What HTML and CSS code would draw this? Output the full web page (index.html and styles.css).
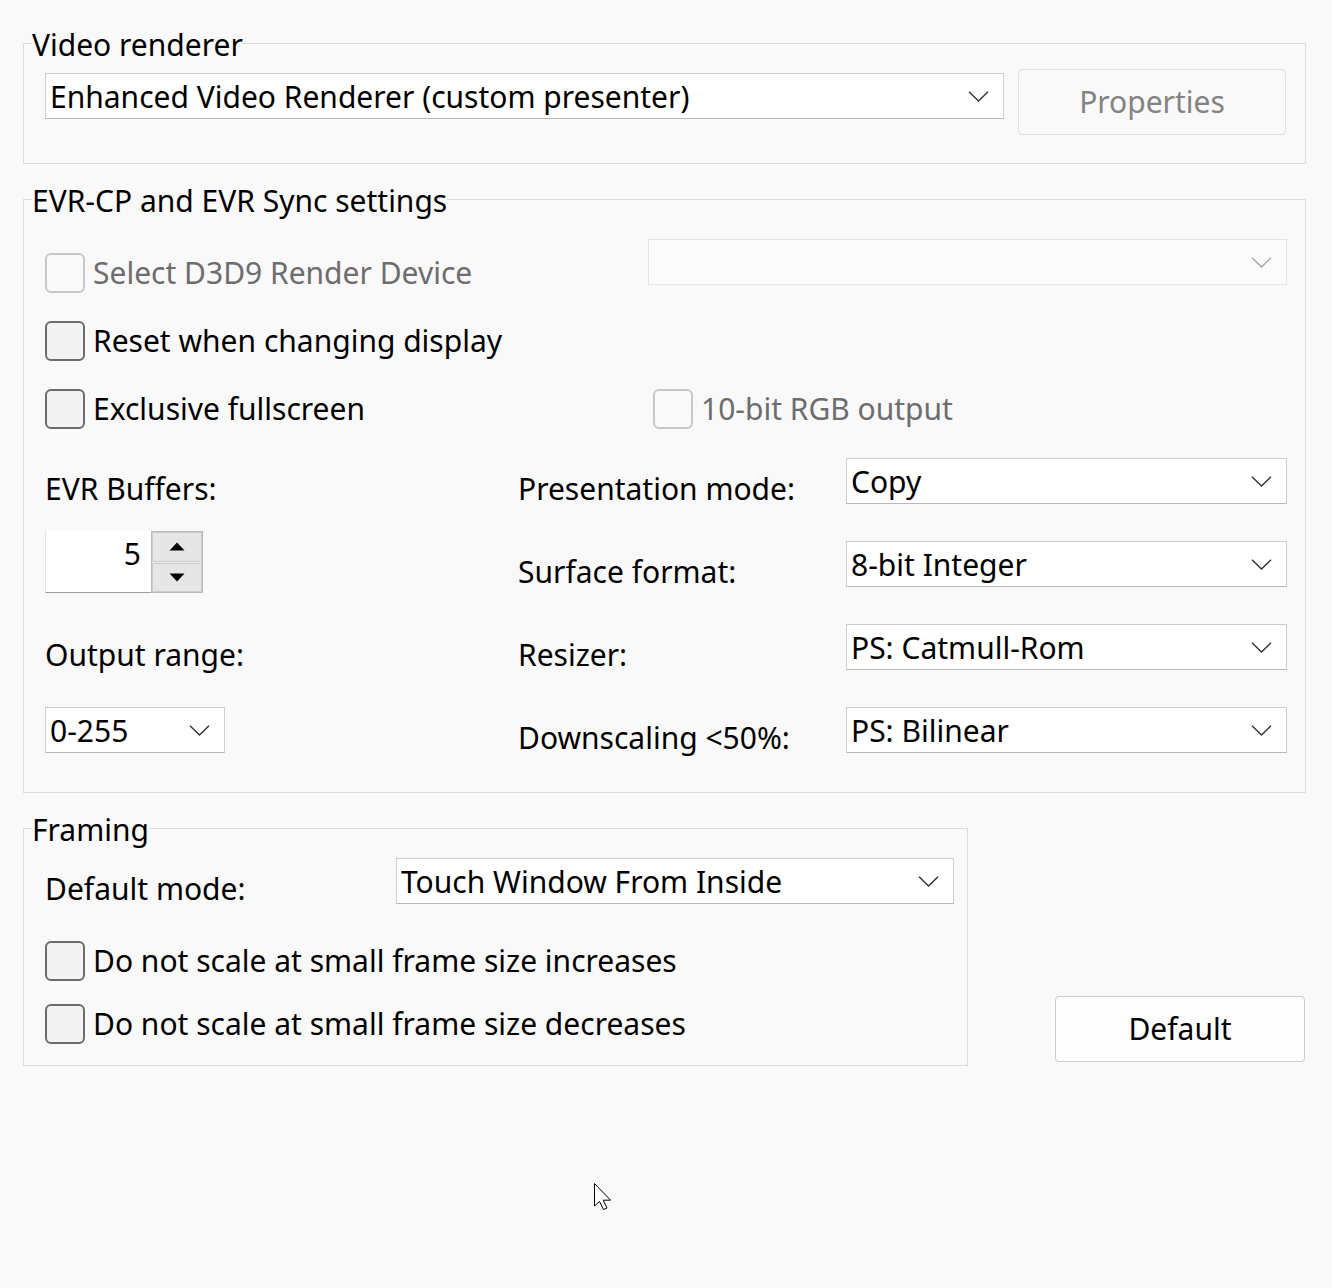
FILE: index.html
```html
<!DOCTYPE html>
<html lang="en">
<head>
<meta charset="utf-8">
<title>Output settings</title>
<link rel="stylesheet" href="styles.css">
</head>
<body>
<div class="page">
  <fieldset class="group group-renderer">
    <legend>Video renderer</legend>
    <div class="group-body renderer-row">
      <div class="combo combo-renderer">
        <span class="combo-text">Enhanced Video Renderer (custom presenter)</span>
        <svg class="chev" width="21" height="11" viewBox="0 0 21 11"><polyline points="1,0.8 10.5,10 20,0.8" fill="none" stroke="#333" stroke-width="1.4"/></svg>
      </div>
      <div class="btn btn-disabled btn-props">Properties</div>
    </div>
  </fieldset>

  <fieldset class="group group-evr">
    <legend>EVR-CP and EVR Sync settings</legend>
    <div class="group-body">
      <div class="row row-a">
        <div class="check disabled row-a-check"><span class="box"></span><span class="label">Select D3D9 Render Device</span></div>
        <div class="combo combo-disabled combo-device">
          <span class="combo-text"></span>
          <svg class="chev" width="21" height="11" viewBox="0 0 21 11"><polyline points="1,0.8 10.5,10 20,0.8" fill="none" stroke="#a8a8a8" stroke-width="1.4"/></svg>
        </div>
      </div>
      <div class="row row-b">
        <div class="check"><span class="box"></span><span class="label">Reset when changing display</span></div>
      </div>
      <div class="row row-c">
        <div class="check check-left"><span class="box"></span><span class="label">Exclusive fullscreen</span></div>
        <div class="check disabled"><span class="box"></span><span class="label">10-bit RGB output</span></div>
      </div>

      <div class="settings-grid">
        <div class="field-label">EVR Buffers:</div>
        <div class="field-label">Presentation mode:</div>
        <div class="combo"><span class="combo-text">Copy</span><svg class="chev" width="21" height="11" viewBox="0 0 21 11"><polyline points="1,0.8 10.5,10 20,0.8" fill="none" stroke="#333" stroke-width="1.4"/></svg></div>

        <div class="spin">
          <div class="spin-edit">5</div>
          <div class="spin-buttons">
            <div class="spin-btn"><svg width="16" height="9" viewBox="0 0 16 9"><polygon points="8,0.5 15.5,8.5 0.5,8.5" fill="#000"/></svg></div>
            <div class="spin-btn"><svg width="16" height="9" viewBox="0 0 16 9"><polygon points="0.5,0.5 15.5,0.5 8,8.5" fill="#000"/></svg></div>
          </div>
        </div>
        <div class="field-label">Surface format:</div>
        <div class="combo"><span class="combo-text">8-bit Integer</span><svg class="chev" width="21" height="11" viewBox="0 0 21 11"><polyline points="1,0.8 10.5,10 20,0.8" fill="none" stroke="#333" stroke-width="1.4"/></svg></div>

        <div class="field-label">Output range:</div>
        <div class="field-label">Resizer:</div>
        <div class="combo"><span class="combo-text">PS: Catmull-Rom</span><svg class="chev" width="21" height="11" viewBox="0 0 21 11"><polyline points="1,0.8 10.5,10 20,0.8" fill="none" stroke="#333" stroke-width="1.4"/></svg></div>

        <div class="combo combo-range"><span class="combo-text">0-255</span><svg class="chev" width="21" height="11" viewBox="0 0 21 11"><polyline points="1,0.8 10.5,10 20,0.8" fill="none" stroke="#333" stroke-width="1.4"/></svg></div>
        <div class="field-label">Downscaling &lt;50%:</div>
        <div class="combo"><span class="combo-text">PS: Bilinear</span><svg class="chev" width="21" height="11" viewBox="0 0 21 11"><polyline points="1,0.8 10.5,10 20,0.8" fill="none" stroke="#333" stroke-width="1.4"/></svg></div>
      </div>
    </div>
  </fieldset>

  <div class="bottom-row">
    <fieldset class="group group-framing">
      <legend>Framing</legend>
      <div class="group-body">
        <div class="row framing-mode">
          <div class="field-label mode-label">Default mode:</div>
          <div class="combo combo-mode"><span class="combo-text">Touch Window From Inside</span><svg class="chev" width="21" height="11" viewBox="0 0 21 11"><polyline points="1,0.8 10.5,10 20,0.8" fill="none" stroke="#333" stroke-width="1.4"/></svg></div>
        </div>
        <div class="row framing-inc">
          <div class="check"><span class="box"></span><span class="label">Do not scale at small frame size increases</span></div>
        </div>
        <div class="row framing-dec">
          <div class="check"><span class="box"></span><span class="label">Do not scale at small frame size decreases</span></div>
        </div>
      </div>
    </fieldset>
    <div class="btn btn-default">Default</div>
  </div>
</div>

<svg class="cursor" width="20" height="30" viewBox="0 0 20 30">
  <path d="M0.5,0.5 L0.5,23 L5.5,18.5 L9.5,26.5 L13,25 L9.2,17.2 L16.5,17.2 Z" fill="#fff" stroke="#000" stroke-width="1" stroke-linejoin="miter"/>
</svg>
</body>
</html>
```

FILE: styles.css
```css
html, body {
  margin: 0;
  padding: 0;
}

body {
  background: #f9f9f9;
  font-family: "Noto Sans", "Open Sans", sans-serif;
  font-size: 30px;
  color: #000;
  min-height: 1288px;
  position: relative;
}

.page {
  padding: 23px 26px 0 23px;
}

.group {
  margin: 0;
  padding: 0;
  min-width: 0;
  border: 1px solid #dcdcdc;
}

.group legend {
  margin-left: 8px;
  padding: 4px 0 0 0;
  line-height: 36px;
  white-space: nowrap;
}

.group-body {
  padding: 0 18px 0 21px;
}

/* Group 1 */
.renderer-row {
  display: flex;
  align-items: flex-start;
  padding-top: 6px;
  padding-bottom: 28px;
  padding-right: 19px;
}

.combo {
  box-sizing: border-box;
  height: 46px;
  background: #fff;
  border: 1px solid #cdcdcd;
  border-bottom-color: #b8b8b8;
  display: flex;
  align-items: center;
  padding: 0 14px 0 4px;
  flex: none;
}

.combo-text {
  flex: 1;
  line-height: 44px;
  padding-top: 2px;
  white-space: nowrap;
  overflow: hidden;
}

.chev {
  flex: none;
  display: block;
}

.combo-renderer {
  width: 959px;
  margin-top: 4px;
}

.btn {
  box-sizing: border-box;
  height: 66px;
  display: flex;
  align-items: center;
  justify-content: center;
  border-radius: 4px;
  line-height: 40px;
  flex: none;
}

.btn-disabled {
  border: 1px solid #e1e1e1;
  background: #f9f9f9;
  color: #838383;
}

.btn-props {
  width: 268px;
  margin-left: auto;
}

/* Group 2 */
.group-evr {
  margin-top: 15px;
}

.group-evr .group-body {
  padding-top: 20px;
  padding-bottom: 39px;
}

.row {
  display: flex;
  align-items: flex-start;
}

.check {
  display: flex;
  align-items: flex-start;
}

.check .box {
  box-sizing: border-box;
  width: 40px;
  height: 40px;
  border: 2px solid #6c6c6c;
  border-radius: 6px;
  background: #f3f3f3;
  flex: none;
}

.check .label {
  margin-left: 8px;
  line-height: 38px;
  padding-top: 1px;
  white-space: nowrap;
}

.check.disabled .box {
  border-color: #c8c8c8;
  background: #fafafa;
}

.check.disabled .label {
  color: #6d6d6d;
}

.row-a-check {
  margin-top: 14px;
}

.combo-disabled {
  background: #fbfbfb;
  border-color: #e3e3e3;
}

.combo-device {
  width: 639px;
  margin-left: auto;
}

.row-b {
  margin-top: 28px;
}

.row-c {
  margin-top: 28px;
}

.check-left {
  width: 608px;
}

.settings-grid {
  margin-top: 29px;
  display: grid;
  grid-template-columns: 473px 328px 441px;
  grid-template-rows: repeat(4, 46px);
  row-gap: 37px;
  align-items: start;
}

.field-label {
  padding-top: 8px;
  line-height: 46px;
  white-space: nowrap;
}

.spin {
  display: flex;
  margin-top: -10px;
  height: 62px;
  width: 158px;
}

.spin-edit {
  box-sizing: border-box;
  width: 106px;
  height: 62px;
  background: #fff;
  border-left: 1px solid #e3e3e3;
  border-bottom: 1px solid #9c9c9c;
  text-align: right;
  padding-right: 10px;
  line-height: 46px;
}

.spin-buttons {
  box-sizing: border-box;
  width: 52px;
  height: 62px;
  border: 1px solid #b9b9b9;
  background: #f0f0f0;
  display: flex;
  flex-direction: column;
  gap: 1px;
  padding: 0;
}

.spin-btn {
  flex: 1;
  box-sizing: border-box;
  border: 1px solid #cbcbcb;
  background: #e6e6e6;
  display: flex;
  align-items: center;
  justify-content: center;
}

.spin-btn svg {
  display: block;
}

.combo-range {
  width: 180px;
}

/* Group 3 */
.bottom-row {
  margin-top: 15px;
  display: flex;
  align-items: flex-end;
}

.group-framing {
  width: 945px;
  box-sizing: border-box;
  flex: none;
}

.group-framing .group-body {
  padding-top: 10px;
  padding-bottom: 21px;
  padding-right: 12px;
}

.framing-mode {
  height: 46px;
}

.mode-label {
  width: 351px;
  flex: none;
}

.combo-mode {
  width: 558px;
}

.framing-inc {
  margin-top: 37px;
}

.framing-dec {
  margin-top: 23px;
}

.btn-default {
  width: 250px;
  margin-left: auto;
  margin-right: 1px;
  margin-bottom: 4px;
  border: 1px solid #cccccc;
  background: #fdfdfd;
  color: #000;
}

.cursor {
  position: absolute;
  left: 594px;
  top: 1183px;
}
```
